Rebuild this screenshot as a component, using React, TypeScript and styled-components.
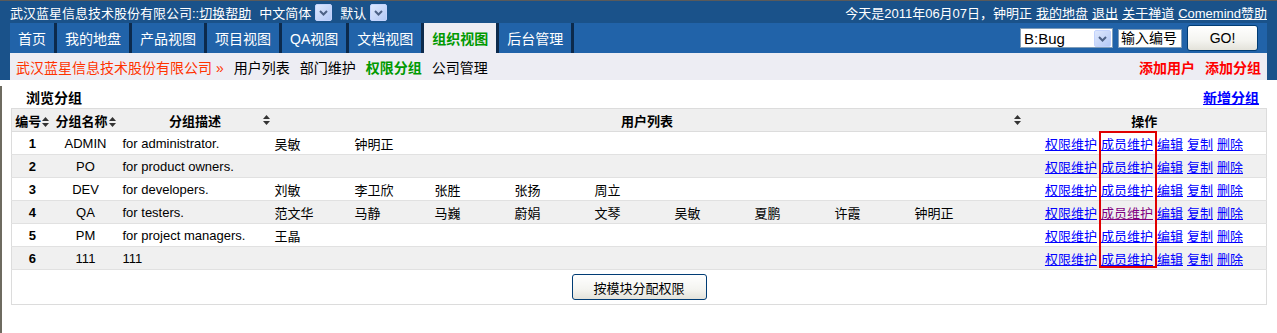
import styled, { createGlobalStyle } from "styled-components";

const GlobalStyle = createGlobalStyle`
  body {
    margin: 0;
    background: #fff;
    font-family: "Liberation Sans", "Noto Sans CJK SC", sans-serif;
    font-size: 13px;
    color: #000;
  }
`;

const Header = styled.header`
  background: #1a528a;
  border-top: 1px solid #5a5a5a;
  padding: 0 10px;
`;

const TopBar = styled.div`
  height: 22px;
  display: flex;
  align-items: center;
  justify-content: space-between;
  color: #fff;
  font-size: 13px;
`;

const TopGroup = styled.div`
  display: flex;
  align-items: center;
  gap: 4px;
  white-space: nowrap;
`;

const TopLink = styled.a`
  color: #fff;
  text-decoration: underline;
`;

const Lang = styled.span`
  margin-left: 4px;
`;

const Nav = styled.nav`
  height: 30px;
  background: #2163a9;
  display: flex;
  align-items: stretch;
  justify-content: space-between;
`;

const Tabs = styled.div`
  display: flex;
`;

const Tab = styled.a<{ $active?: boolean }>`
  display: flex;
  align-items: center;
  padding: 0 8px 1px 8px;
  border-right: 3px solid #0c2a4c;
  font-size: 14px;
  color: ${(p) => (p.$active ? "#009900" : "#fff")};
  background: ${(p) => (p.$active ? "#ededf3" : "transparent")};
  font-weight: ${(p) => (p.$active ? 700 : 400)};
  white-space: nowrap;
`;

const Tools = styled.div`
  display: flex;
  align-items: center;
  gap: 5px;
  padding-right: 9px;
`;

const FakeSelect = styled.div`
  width: 93px;
  height: 20px;
  box-sizing: border-box;
  background: #fff;
  border: 1px solid #7f9db9;
  display: flex;
  align-items: center;
  justify-content: space-between;
  padding: 0 1px 0 3px;
  font-size: 15px;
`;

const TextInput = styled.div`
  width: 64px;
  height: 19px;
  box-sizing: border-box;
  background: #fff;
  border: 1px solid #7f9db9;
  font-size: 14px;
  line-height: 17px;
  padding-left: 2px;
  white-space: nowrap;
  overflow: hidden;
`;

const XpButton = styled.button<{ $w: number; $size?: number }>`
  width: ${(p) => p.$w}px;
  height: 26px;
  border: 1px solid #003c74;
  border-radius: 3px;
  background: linear-gradient(#ffffff, #f4f4f0 60%, #e3e2da);
  font-family: "Liberation Sans", "Noto Sans CJK SC", sans-serif;
  font-size: ${(p) => p.$size || 14}px;
  color: #000;
  padding: 0;
`;

const SubNav = styled.div`
  height: 27px;
  background: #ededf3;
  display: flex;
  align-items: center;
  justify-content: space-between;
  padding: 0 6px;
  font-size: 14px;
`;

const Crumbs = styled.div`
  display: flex;
  align-items: center;
  gap: 10px;
`;

const Company = styled.span`
  color: #ff3300;
`;

const SubLink = styled.a<{ $active?: boolean }>`
  color: ${(p) => (p.$active ? "#009900" : "#000")};
  font-weight: ${(p) => (p.$active ? 700 : 400)};
`;

const AddLinks = styled.div`
  display: flex;
  gap: 10px;
  color: #ff0000;
  font-weight: 700;
`;

const Content = styled.main`
  border-left: 2px solid #6e6b60;
  padding: 0 10px 30px 9px;
`;

const TitleRow = styled.div`
  height: 22px;
  margin-top: 6px;
  display: flex;
  align-items: center;
  justify-content: space-between;
  padding: 0 8px 0 15px;
  font-size: 14px;
  font-weight: 700;
`;

const BlueLink = styled.a`
  color: #0000ff;
  text-decoration: underline;
`;

const TableWrap = styled.div`
  position: relative;
`;

const Table = styled.table`
  width: 100%;
  table-layout: fixed;
  border-collapse: collapse;
  border: 1px solid #dcdcdc;
  font-size: 13px;
`;

const Th = styled.th`
  position: relative;
  height: 22px;
  padding: 0;
  background: #efefef;
  border-bottom: 1px solid #dcdcdc;
  font-weight: 700;
  text-align: center;
  white-space: nowrap;
`;

const SortIcon = styled.svg<{ $far?: boolean }>`
  width: 7px;
  height: 10px;
  vertical-align: -1px;
  margin-left: 1px;
  ${(p) => (p.$far ? "position: absolute; right: 2px; top: 6px;" : "")}
`;

const Row = styled.tr<{ $odd: boolean }>`
  background: ${(p) => (p.$odd ? "#f0f0f0" : "#fff")};
`;

const Td = styled.td<{ $center?: boolean; $bold?: boolean; $pad?: number }>`
  height: 22px;
  padding: 0 0 0 ${(p) => (p.$pad ?? 4)}px;
  border-bottom: 1px solid #e1e1e1;
  text-align: ${(p) => (p.$center ? "center" : "left")};
  font-weight: ${(p) => (p.$bold ? 700 : 400)};
  white-space: nowrap;
  overflow: hidden;
`;

const UserName = styled.span`
  display: inline-block;
  width: 80px;
`;

const Actions = styled.td`
  height: 22px;
  padding: 0 23px 0 0;
  border-bottom: 1px solid #e1e1e1;
  text-align: right;
  white-space: nowrap;
`;

const ActionLink = styled.a<{ $visited?: boolean }>`
  color: ${(p) => (p.$visited ? "#800080" : "#0000ff")};
  text-decoration: underline;
  margin-left: 4px;
`;

const FootCell = styled.td`
  height: 34px;
  padding: 0;
  text-align: center;
  vertical-align: middle;
`;

const Highlight = styled.div`
  position: absolute;
  left: 1088px;
  top: 23px;
  width: 58px;
  height: 137px;
  box-sizing: border-box;
  border: 2px solid #e00000;
  pointer-events: none;
`;

const Arrow = () => (
  <svg width="17" height="17" viewBox="0 0 17 17">
    <defs>
      <linearGradient id="ab" x1="0" y1="0" x2="1" y2="1">
        <stop offset="0" stopColor="#dfe8fd" />
        <stop offset="1" stopColor="#b3c8f5" />
      </linearGradient>
    </defs>
    <rect x="0.5" y="0.5" width="16" height="16" rx="1.5" fill="url(#ab)" stroke="#c3d3fd" />
    <path d="M5 7 L8.5 10.5 L12 7" fill="none" stroke="#4d6185" strokeWidth="2" />
  </svg>
);

const Sort = ({ far }: { far?: boolean }) => (
  <SortIcon $far={far} viewBox="0 0 7 10">
    <path d="M3.5 0 L7 4 L0 4 Z M0 6 L7 6 L3.5 10 Z" fill="#333" />
  </SortIcon>
);

const groups = [
  { id: 1, name: "ADMIN", desc: "for administrator.", users: ["吴敏", "钟明正"] },
  { id: 2, name: "PO", desc: "for product owners.", users: [] },
  { id: 3, name: "DEV", desc: "for developers.", users: ["刘敏", "李卫欣", "张胜", "张扬", "周立"] },
  {
    id: 4,
    name: "QA",
    desc: "for testers.",
    users: ["范文华", "马静", "马巍", "蔚娟", "文琴", "吴敏", "夏鹏", "许霞", "钟明正"],
  },
  { id: 5, name: "PM", desc: "for project managers.", users: ["王晶"] },
  { id: 6, name: "111", desc: "111", users: [] },
];

const tabs = ["首页", "我的地盘", "产品视图", "项目视图", "QA视图", "文档视图", "组织视图", "后台管理"];

export default function App() {
  return (
    <>
      <GlobalStyle />
      <Header>
        <TopBar>
          <TopGroup>
            <span>
              武汉蓝星信息技术股份有限公司::<TopLink>切换帮助</TopLink>
            </span>
            <Lang>中文简体</Lang>
            <Arrow />
            <Lang>默认</Lang>
            <Arrow />
          </TopGroup>
          <TopGroup>
            <span>今天是2011年06月07日，钟明正</span>
            <TopLink>我的地盘</TopLink>
            <TopLink>退出</TopLink>
            <TopLink>关于禅道</TopLink>
            <TopLink>Comemind赞助</TopLink>
          </TopGroup>
        </TopBar>
        <Nav>
          <Tabs>
            {tabs.map((t) => (
              <Tab key={t} $active={t === "组织视图"}>
                {t}
              </Tab>
            ))}
          </Tabs>
          <Tools>
            <FakeSelect>
              <span>B:Bug</span>
              <Arrow />
            </FakeSelect>
            <TextInput>输入编号</TextInput>
            <XpButton $w={71}>GO!</XpButton>
          </Tools>
        </Nav>
        <SubNav>
          <Crumbs>
            <Company>武汉蓝星信息技术股份有限公司 »</Company>
            <SubLink>用户列表</SubLink>
            <SubLink>部门维护</SubLink>
            <SubLink $active>权限分组</SubLink>
            <SubLink>公司管理</SubLink>
          </Crumbs>
          <AddLinks>
            <span>添加用户</span>
            <span>添加分组</span>
          </AddLinks>
        </SubNav>
      </Header>
      <Content>
        <TitleRow>
          <span>浏览分组</span>
          <BlueLink>新增分组</BlueLink>
        </TitleRow>
        <TableWrap>
          <Table>
            <colgroup>
              <col style={{ width: 41 }} />
              <col style={{ width: 66 }} />
              <col style={{ width: 153 }} />
              <col style={{ width: 751 }} />
              <col />
            </colgroup>
            <thead>
              <tr>
                <Th>
                  编号
                  <Sort />
                </Th>
                <Th>
                  分组名称
                  <Sort />
                </Th>
                <Th>
                  分组描述
                  <Sort far />
                </Th>
                <Th>
                  用户列表
                  <Sort far />
                </Th>
                <Th>操作</Th>
              </tr>
            </thead>
            <tbody>
              {groups.map((g, i) => (
                <Row key={g.id} $odd={i % 2 === 1}>
                  <Td $center $bold $pad={0}>
                    {g.id}
                  </Td>
                  <Td $center $pad={0}>
                    {g.name}
                  </Td>
                  <Td>{g.desc}</Td>
                  <Td $pad={3}>
                    {g.users.map((u, k) => (
                      <UserName key={k}>{u}</UserName>
                    ))}
                  </Td>
                  <Actions>
                    <ActionLink>权限维护</ActionLink>
                    <ActionLink $visited={g.id === 4}>成员维护</ActionLink>
                    <ActionLink>编辑</ActionLink>
                    <ActionLink>复制</ActionLink>
                    <ActionLink>删除</ActionLink>
                  </Actions>
                </Row>
              ))}
              <tr>
                <FootCell colSpan={5}>
                  <XpButton $w={135} $size={13}>
                    按模块分配权限
                  </XpButton>
                </FootCell>
              </tr>
            </tbody>
          </Table>
          <Highlight />
        </TableWrap>
      </Content>
    </>
  );
}
